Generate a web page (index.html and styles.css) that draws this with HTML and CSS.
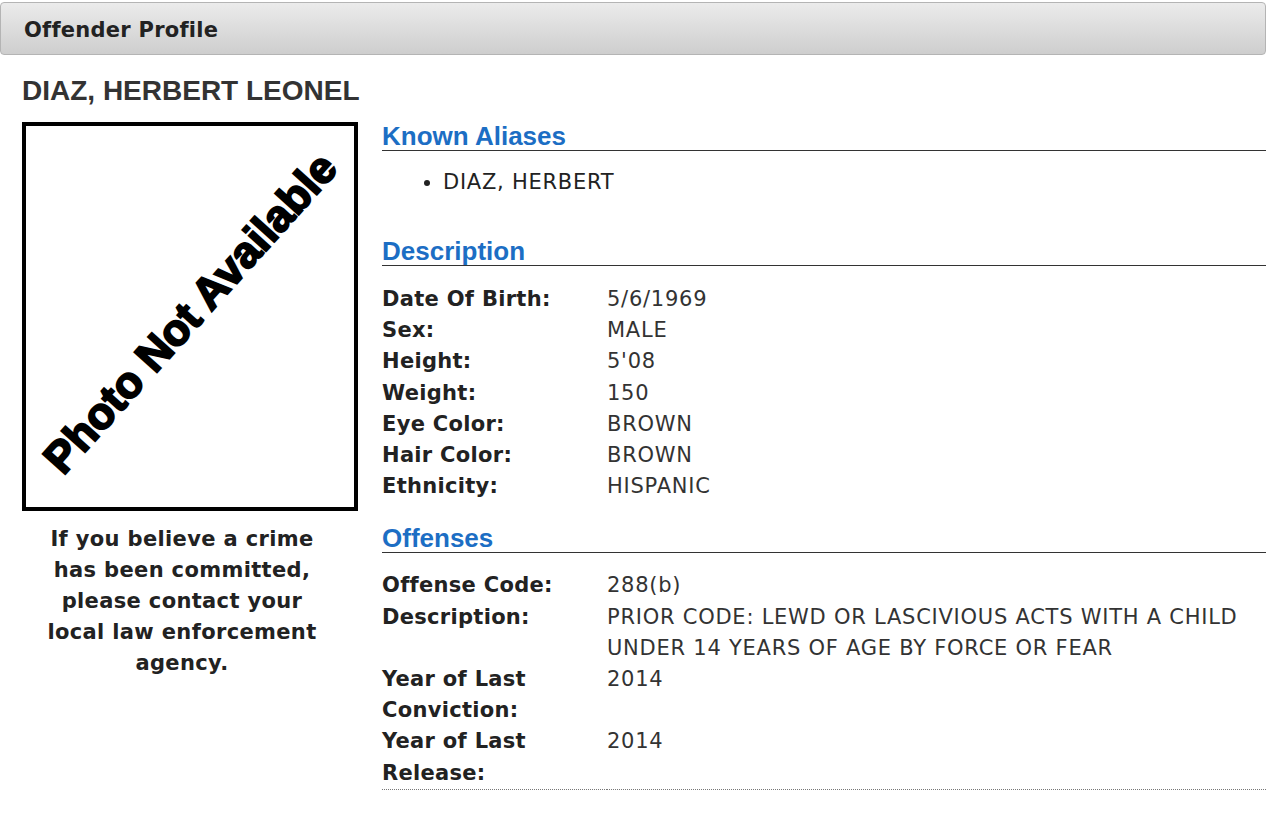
FILE: index.html
```html
<!DOCTYPE html>
<html lang="en">
  <head>
    <meta charset="UTF-8" />
    <meta name="viewport" content="width=device-width, initial-scale=1.0" />
    <title>Offender Profile</title>
    <link rel="stylesheet" href="styles.css">
  </head>
  <body>
    <div class="panel-header">Offender Profile</div>

    <h1 class="offender-name">DIAZ, HERBERT LEONEL</h1>

    <div class="profile">
      <div class="profile-left">
        <div class="photo-box">
          <span class="photo-text">Photo Not Available</span>
        </div>
        <p class="crime-note">
          If you believe a crime has been committed, please contact your local law enforcement agency.
        </p>
      </div>

      <div class="profile-right">
        <h2 class="section-title">Known Aliases</h2>
        <ul class="alias-list">
          <li>DIAZ, HERBERT</li>
        </ul>

        <h2 class="section-title">Description</h2>
        <table class="info-table">
          <tr><th>Date Of Birth:</th><td>5/6/1969</td></tr>
          <tr><th>Sex:</th><td>MALE</td></tr>
          <tr><th>Height:</th><td>5'08</td></tr>
          <tr><th>Weight:</th><td>150</td></tr>
          <tr><th>Eye Color:</th><td>BROWN</td></tr>
          <tr><th>Hair Color:</th><td>BROWN</td></tr>
          <tr><th>Ethnicity:</th><td>HISPANIC</td></tr>
        </table>

        <h2 class="section-title section-offenses">Offenses</h2>
        <table class="info-table offense">
          <tr><th>Offense Code:</th><td>288(b)</td></tr>
          <tr><th>Description:</th><td>PRIOR CODE: LEWD OR LASCIVIOUS ACTS WITH A CHILD UNDER 14 YEARS OF AGE BY FORCE OR FEAR</td></tr>
          <tr><th>Year of Last Conviction:</th><td>2014</td></tr>
          <tr><th>Year of Last Release:</th><td>2014</td></tr>
        </table>
      </div>
    </div>
  </body>
</html>
```

FILE: styles.css
```css
body {
  margin: 0;
  background: #fff;
  color: #222;
  font-family: "DejaVu Sans", Verdana, sans-serif;
  font-size: 21px;
  letter-spacing: 0.75px;
}
.panel-header {
  margin-top: 2px;
  height: 51px;
  line-height: 54px;
  padding-left: 23px;
  border: 1px solid #b4b4b4;
  border-radius: 4px;
  background: linear-gradient(#ebebeb, #cecece);
  font-weight: bold;
  font-size: 21px;
  letter-spacing: 0.25px;
  color: #222;
}
.offender-name {
  margin: 19px 0 0 22px;
  font-family: "Liberation Sans", Arial, sans-serif;
  font-size: 28px;
  line-height: 34px;
  letter-spacing: 0;
  color: #333;
}
.profile {
  display: flex;
  gap: 24px;
  margin-top: 14px;
  padding-left: 22px;
}
.profile-left {
  width: 336px;
  flex-shrink: 0;
}
.photo-box {
  box-sizing: border-box;
  height: 389px;
  border: 4px solid #000;
  display: flex;
  align-items: center;
  justify-content: center;
  overflow: hidden;
}
.photo-text {
  font-family: "Liberation Sans", Arial, sans-serif;
  font-weight: bold;
  font-size: 44px;
  letter-spacing: 0;
  white-space: nowrap;
  color: #000;
  -webkit-text-stroke: 2px #000;
  transform: translate(0, -4px) rotate(-48deg);
}
.crime-note {
  margin: 13px 38px 0 22px;
  text-align: center;
  font-weight: bold;
  font-size: 21px;
  letter-spacing: 0.35px;
  line-height: 31px;
}
.profile-right {
  flex: 1;
}
.section-title {
  margin: 0;
  height: 28px;
  line-height: 28px;
  border-bottom: 1px solid #333;
  font-family: "Liberation Sans", Arial, sans-serif;
  font-size: 26px;
  letter-spacing: 0;
  color: #1c6ec4;
}
.alias-list {
  margin: 16px 0 39px;
  padding-left: 61px;
  line-height: 31px;
}
.info-table {
  margin-top: 18px;
  border-collapse: collapse;
  table-layout: fixed;
  width: 100%;
  line-height: 31.2px;
}
.info-table th {
  width: 225px;
  padding: 0;
  text-align: left;
  vertical-align: top;
  font-size: 21px;
  letter-spacing: 0.3px;
  color: #222;
}
.info-table td {
  padding: 0;
  vertical-align: top;
  color: #333;
}
.section-offenses {
  margin-top: 22px;
}
.offense {
  margin-top: 17px;
  border-bottom: 1px dotted #777;
}
```
